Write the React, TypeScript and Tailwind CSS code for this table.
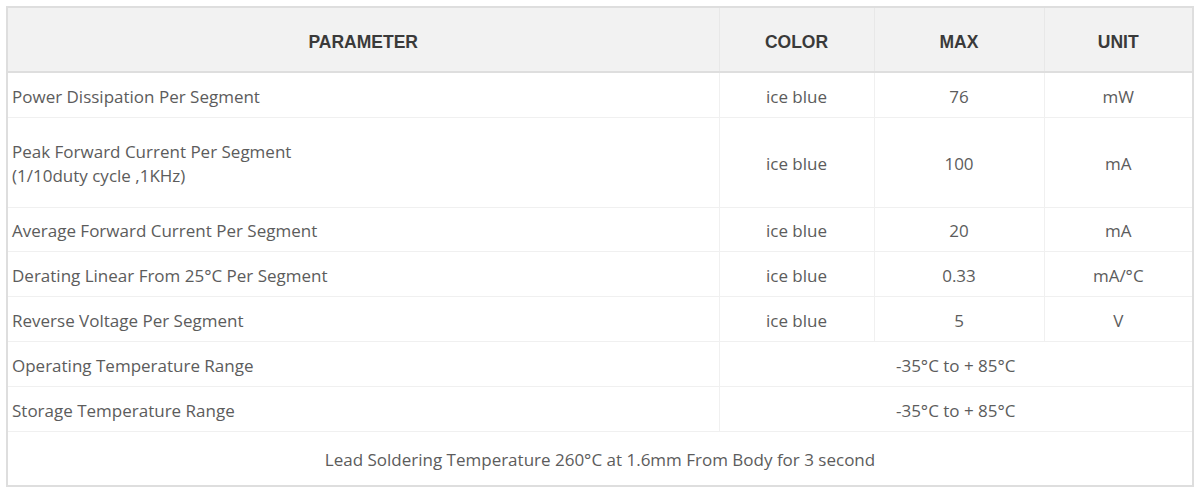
const rows = [
  { name: ["Power Dissipation Per Segment"], color: "ice blue", max: "76", unit: "mW", h: "h-[45px]" },
  {
    name: ["Peak Forward Current Per Segment", "(1/10duty cycle ,1KHz)"],
    color: "ice blue",
    max: "100",
    unit: "mA",
    h: "h-[90px]",
  },
  { name: ["Average Forward Current Per Segment"], color: "ice blue", max: "20", unit: "mA", h: "h-[44px]" },
  { name: ["Derating Linear From 25°C Per Segment"], color: "ice blue", max: "0.33", unit: "mA/°C", h: "h-[45px]" },
  { name: ["Reverse Voltage Per Segment"], color: "ice blue", max: "5", unit: "V", h: "h-[45px]" },
];

const ranges = ["Operating Temperature Range", "Storage Temperature Range"];

export default function App() {
  return (
    <div className="w-[1200px] h-[493px] bg-white pt-[6px] pl-[6px]">
      <table
        className="w-[1186px] table-fixed border-collapse border-2 border-[#dedede] text-[17px] leading-[24px] text-[#5c5c5c]"
        style={{ fontFamily: '"Open Sans", sans-serif' }}
      >
        <colgroup>
          <col className="w-[712px]" />
          <col className="w-[155px]" />
          <col className="w-[170px]" />
          <col className="w-[149px]" />
        </colgroup>
        <thead>
          <tr
            className="h-[65px] bg-[#f2f2f2] border-b-2 border-[#dedede] text-[17.5px] font-bold text-[#3a3a3a]"
            style={{ fontFamily: '"Liberation Sans", Arial, sans-serif' }}
          >
            <th className="pt-[4px] border-r border-[#e8e8e8]">PARAMETER</th>
            <th className="pt-[4px] border-r border-[#e8e8e8]">COLOR</th>
            <th className="pt-[4px] border-r border-[#e8e8e8]">MAX</th>
            <th className="pt-[4px]">UNIT</th>
          </tr>
        </thead>
        <tbody>
          {rows.map((r) => (
            <tr key={r.name[0]} className={`${r.h} border-b border-[#f0f0f0]`}>
              <td className="pl-[4px] pr-[6px] pt-[4px] border-r border-[#f0f0f0]">
                {r.name.map((l) => (
                  <div key={l}>{l}</div>
                ))}
              </td>
              <td className="pt-[4px] text-center border-r border-[#f0f0f0]">{r.color}</td>
              <td className="pt-[4px] text-center border-r border-[#f0f0f0]">{r.max}</td>
              <td className="pt-[4px] text-center">{r.unit}</td>
            </tr>
          ))}
          {ranges.map((name) => (
            <tr key={name} className="h-[45px] border-b border-[#f0f0f0]">
              <td className="pl-[4px] pr-[6px] pt-[4px] border-r border-[#f0f0f0]">{name}</td>
              <td colSpan={3} className="pt-[4px] text-center">
                -35°C to + 85°C
              </td>
            </tr>
          ))}
          <tr className="h-[55px]">
            <td colSpan={4} className="pt-[4px] text-center">
              Lead Soldering Temperature 260°C at 1.6mm From Body for 3 second
            </td>
          </tr>
        </tbody>
      </table>
    </div>
  );
}
